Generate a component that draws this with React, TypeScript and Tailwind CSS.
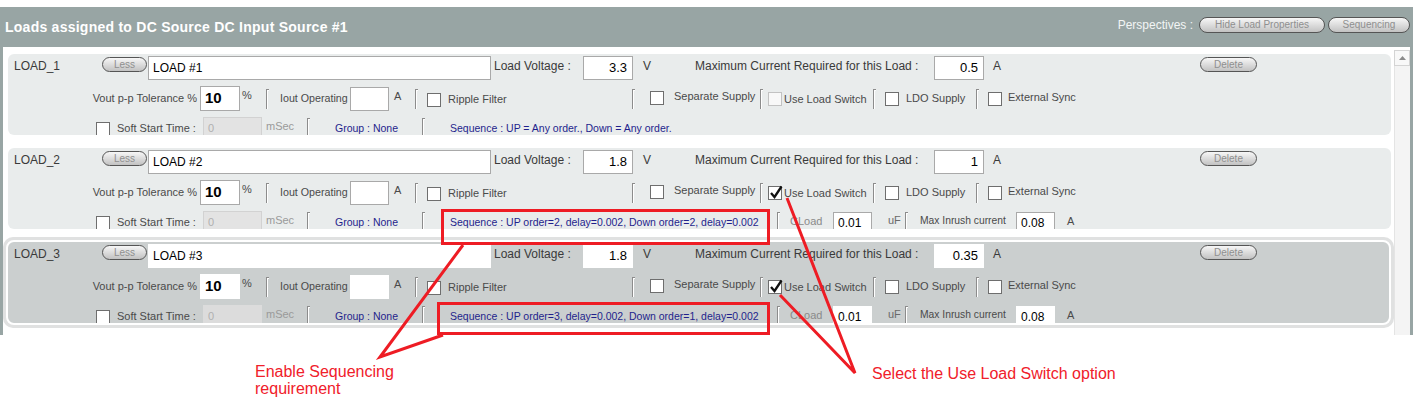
import React from "react";

interface LoadData {
  id: string;
  name: string;
  voltage: string;
  current: string;
  uls: boolean;
  seq: string;
  extra: boolean;
  selected: boolean;
}

const loads: LoadData[] = [
  {
    id: "LOAD_1",
    name: "LOAD #1",
    voltage: "3.3",
    current: "0.5",
    uls: false,
    seq: "Sequence : UP = Any order., Down = Any order.",
    extra: false,
    selected: false,
  },
  {
    id: "LOAD_2",
    name: "LOAD #2",
    voltage: "1.8",
    current: "1",
    uls: true,
    seq: "Sequence : UP order=2, delay=0.002, Down order=2, delay=0.002",
    extra: true,
    selected: false,
  },
  {
    id: "LOAD_3",
    name: "LOAD #3",
    voltage: "1.8",
    current: "0.35",
    uls: true,
    seq: "Sequence : UP order=3, delay=0.002, Down order=1, delay=0.002",
    extra: true,
    selected: true,
  },
];

function PillButton({ label, className }: { label: string; className: string }) {
  return (
    <div
      className={`flex items-center justify-center rounded-[8px] border border-[#555] bg-linear-to-b from-[#f7f7f7] to-[#c2c2c2] text-[10px] leading-none text-[#8f8f8f] ${className}`}
    >
      {label}
    </div>
  );
}

function Bracket({ className }: { className: string }) {
  return (
    <div className={`flex shrink-0 ${className}`}>
      <div className="h-[20px] w-[3px] border-l border-t border-[#8c8c8c] shadow-[inset_1px_1px_0_#ffffff]" />
    </div>
  );
}

function CheckBox({ checked, disabled, className = "" }: { checked?: boolean; disabled?: boolean; className?: string }) {
  return (
    <div
      className={`relative h-[14px] w-[14px] shrink-0 border ${
        disabled ? "border-[#c2c2c2] bg-[#f8f8f8]" : "border-[#6e6e6e] bg-white"
      } ${className}`}
    >
      {checked && (
        <svg className="absolute left-[0px] top-[-1px] overflow-visible" width="14" height="14" viewBox="0 0 14 14">
          <path d="M2 7 L5.5 11 L12.5 0.5" stroke="#111" strokeWidth="2.3" fill="none" strokeLinejoin="miter" />
        </svg>
      )}
    </div>
  );
}

function Box({ children, className, sel }: { children?: React.ReactNode; className: string; sel: boolean }) {
  return (
    <div className={`flex shrink-0 items-center border bg-white text-black ${sel ? "border-white" : "border-[#a9a9a9]"} ${className}`}>
      {children}
    </div>
  );
}

function Card({ d }: { d: LoadData }) {
  const sel = d.selected;
  return (
    <div className={`rounded-[10px] p-[3px] ${sel ? "bg-[#e0e1e1]" : ""}`}>
      <div
        className={`h-[85px] overflow-hidden rounded-[8px] border-2 pt-[2px] ${
          sel ? "border-white bg-[#cbcfcf]" : "-mr-[2px] border-transparent bg-[#e9ecec] bg-clip-padding"
        }`}
      >
        {/* Row 1 */}
        <div className="flex h-[24px] items-start text-[12px] text-[#3a3a3a]">
          <div className="w-[94px] shrink-0 pl-[6px] leading-[20px]">{d.id}</div>
          <PillButton label="Less" className="mt-[1px] h-[15px] w-[45px] shrink-0" />
          <Box sel={sel} className="ml-[1px] h-[24px] w-[343px] pl-[4px] text-[12px]">
            {d.name}
          </Box>
          <div className="ml-[3px] w-[89px] shrink-0 leading-[20px]">Load Voltage :</div>
          <Box sel={sel} className="h-[24px] w-[50px] justify-end pr-[5px] text-[13px]">
            {d.voltage}
          </Box>
          <div className="ml-[10px] w-[52px] shrink-0 leading-[20px]">V</div>
          <div className="w-[239px] shrink-0 leading-[20px]">Maximum Current Required for this Load :</div>
          <Box sel={sel} className="h-[24px] w-[50px] justify-end pr-[5px] text-[13px]">
            {d.current}
          </Box>
          <div className="ml-[9px] w-[207px] shrink-0 leading-[20px]">A</div>
          <PillButton label="Delete" className="mt-[1px] h-[15px] w-[57px] shrink-0" />
        </div>

        {/* Row 2 */}
        <div className="mt-[6px] flex h-[25px] items-center text-[11px] text-[#4a4a4a]">
          <div className="w-[189px] shrink-0 text-right">Vout p-p Tolerance %</div>
          <Box sel={sel} className="ml-[3px] h-[25px] w-[40px] pl-[4px] text-[15px] font-bold">
            10
          </Box>
          <div className="ml-[2px] w-[24px] shrink-0 self-start pt-[2px] leading-[14px]">%</div>
          <Bracket className="w-[14px]" />
          <div className="w-[70px] shrink-0 text-[10.7px]">Iout Operating</div>
          <Box sel={sel} className="h-[24px] w-[39px]" />
          <div className="ml-[5px] w-[21px] shrink-0 self-start pt-[3px] leading-[14px]">A</div>
          <Bracket className="w-[12px]" />
          <CheckBox className="mt-[2px]" />
          <div className="ml-[7px] w-[184px] shrink-0 pt-[1px]">Ripple Filter</div>
          <Bracket className="w-[18px]" />
          <CheckBox className="-mt-[1px]" />
          <div className="ml-[10px] w-[86px] shrink-0 -mt-[4px]">Separate Supply</div>
          <Bracket className="w-[8px]" />
          <CheckBox checked={d.uls} disabled={!d.uls} className="mt-[1px]" />
          <div className="ml-[2px] w-[89px] shrink-0 pt-[1px]">Use Load Switch</div>
          <Bracket className="w-[12px]" />
          <CheckBox className="mt-[1px]" />
          <div className="ml-[7px] w-[70px] shrink-0">LDO Supply</div>
          <Bracket className="w-[12px]" />
          <CheckBox />
          <div className="ml-[6px] shrink-0 -mt-[2px]">External Sync</div>
        </div>

        {/* Row 3 */}
        <div className="mt-[6px] flex h-[22px] items-start text-[11px] leading-[22px] text-[#4a4a4a]">
          <div className="w-[88px] shrink-0" />
          <CheckBox className="mt-[5px]" />
          <div className="ml-[7px] w-[86px] shrink-0">Soft Start Time :</div>
          <div
            className={`flex h-[22px] w-[59px] shrink-0 items-center border pl-[4px] text-[11px] text-[#b0b0b0] ${
              sel ? "border-[#dcdcdc] bg-[#dcdcdc]" : "border-[#d2d2d2] bg-[#e3e3e3]"
            }`}
          >
            0
          </div>
          <div className="ml-[4px] w-[41px] shrink-0 -mt-[2px] text-[#9a9a9a]">mSec</div>
          <Bracket className="mt-[1px] w-[28px]" />
          <div className="w-[87px] shrink-0 text-[10.5px] text-[#1f1f8c]">Group : None</div>
          <Bracket className="mt-[1px] w-[28px]" />
          <div className="w-[327px] shrink-0 whitespace-nowrap text-[10.5px] text-[#1f1f8c]">{d.seq}</div>
          {d.extra && (
            <>
              <Bracket className="mt-[1px] w-[13px]" />
              <div className="w-[43px] shrink-0 -mt-[1px] text-[#8a8a8a]">CLoad</div>
              <Box sel={sel} className="mt-[1px] h-[22px] w-[39px] pl-[4px] text-[12px]">
                0.01
              </Box>
              <div className="ml-[16px] w-[17px] shrink-0 -mt-[2px] text-[#6a6a6a]">uF</div>
              <Bracket className="mt-[1px] w-[15px]" />
              <div className="w-[96px] shrink-0 -mt-[1px] text-[10.3px]">Max Inrush current</div>
              <Box sel={sel} className="mt-[1px] h-[22px] w-[39px] pl-[4px] text-[12px]">
                0.08
              </Box>
              <div className="ml-[12px] shrink-0 -mt-[1px]">A</div>
            </>
          )}
        </div>
      </div>
    </div>
  );
}

export default function App() {
  return (
    <div className="relative h-[399px] w-[1413px] overflow-hidden bg-white font-['Liberation_Sans',Arial,sans-serif]">
      <div className="mt-[7px] bg-[#98a5a4]">
        <div className="flex h-[40px] items-center justify-between pl-[5px] pr-[3px]">
          <div className="text-[14px] font-bold tracking-[0.25px] text-white">
            Loads assigned to DC Source DC Input Source #1
          </div>
          <div className="mb-[4px] flex items-center">
            <span className="mr-[6px] text-[12px] text-[#f2f5f5]">Perspectives :</span>
            <PillButton label="Hide Load Properties" className="h-[16px] w-[126px]" />
            <PillButton label="Sequencing" className="ml-[3px] h-[16px] w-[82px]" />
          </div>
        </div>
        <div className="mx-[3px] flex h-[288px] bg-white">
          <div className="flex w-[1391px] flex-col gap-[3px] pt-[2px]">
            {loads.map((d) => (
              <Card key={d.id} d={d} />
            ))}
          </div>
          <div className="mt-[3px] flex w-[16px] flex-col">
            <div className="flex h-[16px] items-center justify-center border border-[#d4d4d4] bg-[#f8f8f8]">
              <svg width="7" height="4" viewBox="0 0 7 4">
                <path d="M0 4 L3.5 0 L7 4 Z" fill="#8a8a8a" />
              </svg>
            </div>
            <div className="flex-1 border-l border-[#e4e4e4] bg-[#f4f4f4]" />
          </div>
        </div>
      </div>

      {/* Annotations */}
      <svg className="pointer-events-none absolute left-0 top-0" width="1413" height="399">
        <g stroke="#ee1c24" strokeWidth="3" fill="none">
          <rect x="442.5" y="210.5" width="326" height="33" />
          <rect x="438.5" y="303.5" width="330" height="30" />
          <polyline points="463,245 380,357 443,335" />
          <polyline points="787,198 855,373 780,295" />
        </g>
      </svg>
      <div className="absolute left-[255px] top-[363px] text-[16px] leading-[17px] text-[#f0202a]">
        Enable Sequencing
        <br />
        requirement
      </div>
      <div className="absolute left-[872px] top-[365px] text-[16px] leading-[17px] text-[#f0202a]">
        Select the Use Load Switch option
      </div>
    </div>
  );
}
